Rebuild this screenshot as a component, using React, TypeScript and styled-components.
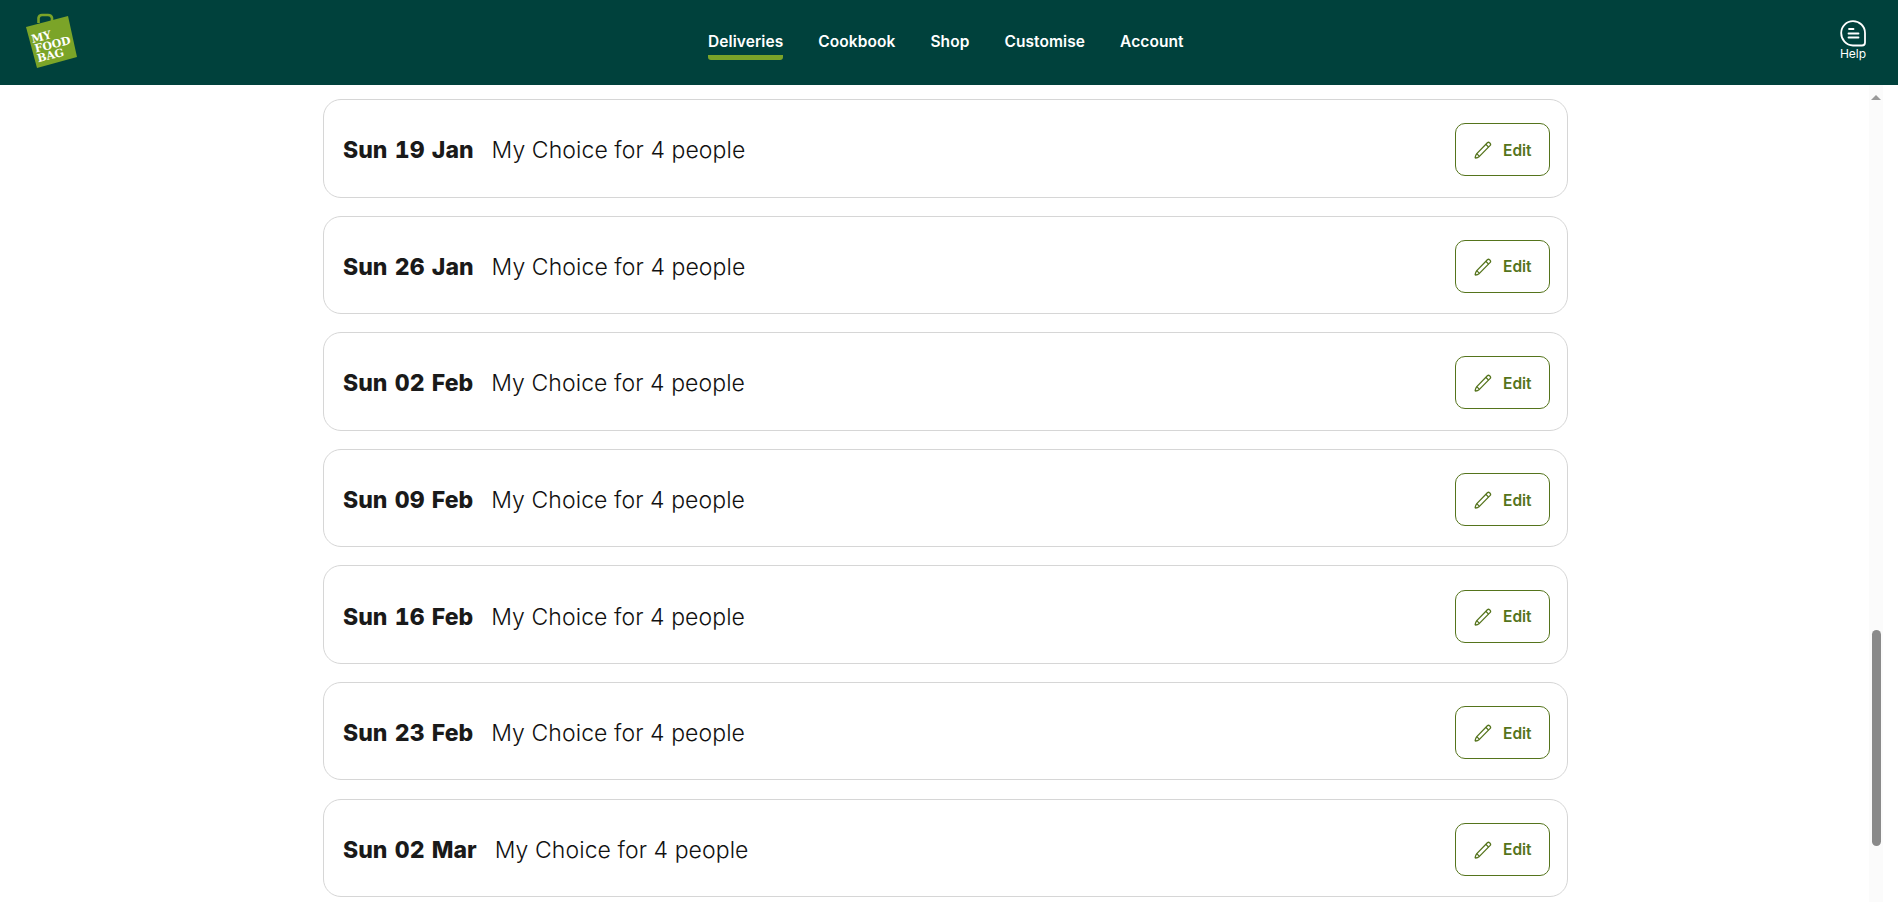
import styled, { createGlobalStyle } from 'styled-components';

interface Delivery {
  date: string;
  plan: string;
}

const deliveries: Delivery[] = [
  { date: 'Sun 19 Jan', plan: 'My Choice for 4 people' },
  { date: 'Sun 26 Jan', plan: 'My Choice for 4 people' },
  { date: 'Sun 02 Feb', plan: 'My Choice for 4 people' },
  { date: 'Sun 09 Feb', plan: 'My Choice for 4 people' },
  { date: 'Sun 16 Feb', plan: 'My Choice for 4 people' },
  { date: 'Sun 23 Feb', plan: 'My Choice for 4 people' },
  { date: 'Sun 02 Mar', plan: 'My Choice for 4 people' },
];

const navItems = ['Deliveries', 'Cookbook', 'Shop', 'Customise', 'Account'];

const GlobalStyle = createGlobalStyle`
  html, body {
    margin: 0;
    height: 100%;
    overflow: hidden;
    background: #fff;
    font-family: Inter, Lato, sans-serif;
  }
`;

const Page = styled.div`
  height: 902px;
  display: flex;
  flex-direction: column;
  overflow: hidden;
`;

const Header = styled.header`
  height: 85px;
  flex-shrink: 0;
  background: #00413c;
  display: grid;
  grid-template-columns: 708px 1fr auto;
  align-items: start;
`;

const LogoLink = styled.a`
  display: block;
  width: 90px;
  height: 85px;
`;

const Nav = styled.nav`
  display: flex;
  gap: 35px;
  padding-top: 31px;
`;

const NavItem = styled.a<{ $active?: boolean }>`
  display: block;
  color: #fff;
  font-size: 15.5px;
  line-height: 22px;
  font-weight: 600;
  letter-spacing: 0.08px;
  padding-bottom: 2px;
  border-bottom: 5px solid ${({ $active }) => ($active ? '#7aa329' : 'transparent')};
  border-radius: 3px;
`;

const HelpButton = styled.a`
  display: flex;
  flex-direction: column;
  align-items: center;
  width: 26px;
  margin: 20px 32px 0 0;
  color: #fff;
  font-size: 12px;
  line-height: 14px;
`;

const Body = styled.div`
  flex: 1;
  display: flex;
  min-height: 0;
`;

const Main = styled.main`
  flex: 1;
  padding: 14px 0 0 323px;
  overflow: hidden;
`;

const List = styled.div`
  width: 1245px;
  display: flex;
  flex-direction: column;
  gap: 18.1px;
`;

const Card = styled.div`
  box-sizing: border-box;
  height: 98.5px;
  flex-shrink: 0;
  display: flex;
  align-items: center;
  justify-content: space-between;
  padding: 3px 17px 0 19px;
  border: 1px solid #d6d6d6;
  border-radius: 18px;
  background: #fff;
`;

const Summary = styled.div`
  display: flex;
  align-items: baseline;
  gap: 18px;
  padding-top: 1px;
  font-size: 23px;
  line-height: 32px;
  color: #1a1a1a;
`;

const DateLabel = styled.span`
  font-weight: 800;
  font-variant-numeric: tabular-nums;
  word-spacing: 1.2px;
`;

const PlanLabel = styled.span`
  font-weight: 300;
  letter-spacing: 0.08px;
  color: #111;
`;

const EditButton = styled.button`
  box-sizing: border-box;
  width: 95px;
  height: 53px;
  display: flex;
  align-items: center;
  gap: 11px;
  padding: 1px 0 0 18px;
  border: 1px solid #55741c;
  border-radius: 10px;
  background: #fff;
  color: #55741c;
  font-family: inherit;
  font-size: 15.5px;
  font-weight: 600;
`;

const ScrollTrack = styled.div`
  width: 14px;
  margin-right: 15px;
  background: #fbfbfb;
  display: flex;
  flex-direction: column;
  align-items: center;
`;

const ScrollArrow = styled.div`
  margin-top: 10px;
  width: 0;
  height: 0;
  border-left: 5px solid transparent;
  border-right: 5px solid transparent;
  border-bottom: 5px solid #9a9a9a;
`;

const ScrollThumb = styled.div`
  margin-top: 530px;
  width: 9px;
  height: 216px;
  border-radius: 5px;
  background: #8a8a8a;
`;

function Logo() {
  return (
    <svg width="90" height="85" viewBox="0 0 90 85">
      <path
        d="M38.5 23 L38.5 18 Q39 15 42 15 L48 15 Q51.5 15 52 18 L52 21"
        fill="none"
        stroke="#7ba428"
        strokeWidth="2.6"
      />
      <polygon points="26,27 68,16 77,57 37,68" fill="#7ba428" />
      <g
        transform="rotate(-14 32 37)"
        fill="#fff"
        fontFamily='"DejaVu Serif", serif'
        fontWeight="700"
        fontSize="11"
      >
        <text x="31" y="43">MY</text>
        <text x="32" y="53">FOOD</text>
        <text x="32" y="63">BAG</text>
      </g>
    </svg>
  );
}

function HelpIcon() {
  return (
    <svg width="26" height="27" viewBox="0 0 26 27" fill="none" stroke="#fff" strokeLinecap="round">
      <path
        d="M13 1.2 C19.5 1.2 25 6 25 13 L25 22.5 Q25 25.5 22 25.5 L13 25.5 C6 25.5 1.2 19.5 1.2 13 C1.2 6.5 6.5 1.2 13 1.2 Z"
        strokeWidth="1.8"
      />
      <path d="M9 9 L13.5 9 M8.5 13.5 L18.5 13.5 M8.5 17.5 L18.5 17.5" strokeWidth="1.8" />
    </svg>
  );
}

function PencilIcon() {
  return (
    <svg width="18" height="18" viewBox="0 0 18 18" fill="none" stroke="#55741c" strokeWidth="1.3" strokeLinejoin="round">
      <path d="M13.6 1.5 Q14.6 0.8 15.8 1.9 L16.2 2.4 Q17 3.4 16.2 4.4 L5.4 15.4 Q3.5 16.8 1.6 17 Q1.2 17 1.2 16.4 Q1.4 14.4 2.8 12.6 Z" />
      <path d="M11.8 3.3 L14.6 6.1 M2.8 12.6 L5.4 15.4" />
    </svg>
  );
}

export default function App() {
  return (
    <Page>
      <GlobalStyle />
      <Header>
        <LogoLink aria-label="My Food Bag">
          <Logo />
        </LogoLink>
        <Nav>
          {navItems.map((item) => (
            <NavItem key={item} $active={item === 'Deliveries'}>
              {item}
            </NavItem>
          ))}
        </Nav>
        <HelpButton>
          <HelpIcon />
          Help
        </HelpButton>
      </Header>
      <Body>
        <Main>
          <List>
            {deliveries.map((delivery) => (
              <Card key={delivery.date}>
                <Summary>
                  <DateLabel>{delivery.date}</DateLabel>
                  <PlanLabel>{delivery.plan}</PlanLabel>
                </Summary>
                <EditButton>
                  <PencilIcon />
                  Edit
                </EditButton>
              </Card>
            ))}
          </List>
        </Main>
        <ScrollTrack>
          <ScrollArrow />
          <ScrollThumb />
        </ScrollTrack>
      </Body>
    </Page>
  );
}
